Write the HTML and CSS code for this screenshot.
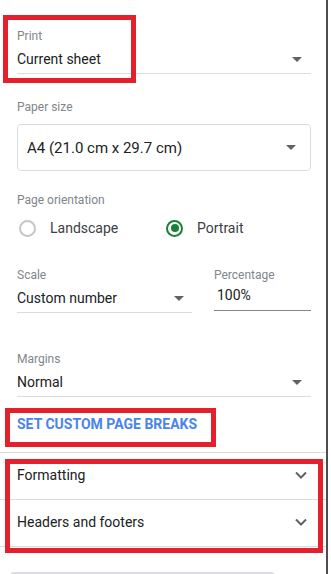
FILE: index.html
```html
<!DOCTYPE html>
<html>
<head>
<meta charset="utf-8">
<link rel="stylesheet" href="styles.css">
</head>
<body>
<div class="panel">
  <div class="content">
    <div class="field">
      <div class="label">Print</div>
      <div class="value-row">
        <span>Current sheet</span>
        <svg class="caret" width="10" height="5" viewBox="0 0 10 5"><path d="M0 0h10L5 5z"/></svg>
      </div>
    </div>

    <div class="field paper">
      <div class="label">Paper size</div>
      <div class="select-box">
        <span>A4 (21.0 cm x 29.7 cm)</span>
        <svg class="caret" width="10" height="5" viewBox="0 0 10 5"><path d="M0 0h10L5 5z"/></svg>
      </div>
    </div>

    <div class="field orient">
      <div class="label">Page orientation</div>
      <div class="radios">
        <div class="radio-opt"><span class="radio"></span><span>Landscape</span></div>
        <div class="radio-opt"><span class="radio checked"></span><span>Portrait</span></div>
      </div>
    </div>

    <div class="scale-grid">
      <div class="field">
        <div class="label">Scale</div>
        <div class="value-row scale-val">
          <span>Custom number</span>
          <svg class="caret" width="10" height="5" viewBox="0 0 10 5"><path d="M0 0h10L5 5z"/></svg>
        </div>
      </div>
      <div class="field">
        <div class="label">Percentage</div>
        <div class="input-row">100%</div>
      </div>
    </div>

    <div class="field margins">
      <div class="label">Margins</div>
      <div class="value-row">
        <span>Normal</span>
        <svg class="caret" width="10" height="5" viewBox="0 0 10 5"><path d="M0 0h10L5 5z"/></svg>
      </div>
    </div>

    <div class="link-btn">SET CUSTOM PAGE BREAKS</div>
  </div>

  <div class="accordion">
    <div class="acc-row">
      <span>Formatting</span>
      <svg class="chev" width="12" height="8" viewBox="0 0 12 8"><path d="M1 1.5l5 5 5-5"/></svg>
    </div>
    <div class="acc-row">
      <span>Headers and footers</span>
      <svg class="chev" width="12" height="8" viewBox="0 0 12 8"><path d="M1 1.5l5 5 5-5"/></svg>
    </div>
  </div>

  <div class="hbar"></div>

  <div class="mark mark-print"></div>
  <div class="mark mark-breaks"></div>
  <div class="mark mark-acc"></div>
</div>
</body>
</html>
```

FILE: styles.css
```css
html, body {
  margin: 0;
  padding: 0;
  background: #ffffff;
}

body {
  font-family: Roboto, "Liberation Sans", Arial, sans-serif;
  color: #202124;
}

.panel {
  position: relative;
  width: 326px;
  height: 574px;
  border-right: 2px solid #4d4d4d;
  overflow: hidden;
}

.content {
  padding: 28px 15px 20px 17px;
}

.label {
  font-size: 12px;
  line-height: 16px;
  color: #80868b;
}

.value-row {
  display: flex;
  justify-content: space-between;
  align-items: center;
  height: 20px;
  margin-top: 5px;
  padding-bottom: 4px;
  border-bottom: 1px solid #dadce0;
  font-size: 14px;
  line-height: 20px;
  color: #202124;
}

.caret {
  fill: #5f6368;
  margin-right: 9px;
  flex: none;
}

.paper {
  margin-top: 25px;
}

.select-box {
  display: flex;
  justify-content: space-between;
  align-items: center;
  box-sizing: border-box;
  height: 47px;
  margin-top: 9px;
  padding: 0 5px 0 9px;
  border: 1px solid #dadce0;
  border-radius: 4px;
  font-size: 15px;
}

.orient {
  margin-top: 21px;
}

.radios {
  display: grid;
  grid-template-columns: 147px auto;
  height: 24px;
  margin-top: 8px;
  padding-left: 2px;
  font-size: 14px;
  color: #3c4043;
}

.radio-opt {
  display: flex;
  align-items: center;
  gap: 14px;
}

.radio {
  box-sizing: border-box;
  width: 17px;
  height: 17px;
  border: 2px solid #c4c7c5;
  border-radius: 50%;
  display: flex;
  align-items: center;
  justify-content: center;
}

.radio.checked {
  border-color: #188038;
}

.radio.checked::after {
  content: "";
  width: 8px;
  height: 8px;
  border-radius: 50%;
  background: #188038;
}

.scale-grid {
  display: grid;
  grid-template-columns: 175px 97px;
  column-gap: 22px;
  margin-top: 27px;
  align-items: start;
}

.scale-val .caret {
  margin-right: 8px;
}

.input-row {
  height: 20px;
  margin-top: 2px;
  padding: 0 0 5px 3px;
  border-bottom: 1px solid #80868b;
  font-size: 14px;
  line-height: 20px;
}

.margins {
  margin-top: 38px;
}

.link-btn {
  margin-top: 19px;
  font-size: 14px;
  font-weight: 700;
  line-height: 16px;
  color: #4a84eb;
}

.accordion {
  border-top: 1px solid #dadce0;
}

.acc-row {
  display: flex;
  justify-content: space-between;
  align-items: center;
  height: 46px;
  padding: 0 19px 0 17px;
  border-bottom: 1px solid #dadce0;
  font-size: 14px;
  color: #202124;
}

.acc-row span {
  margin-top: -2px;
}

.chev {
  fill: none;
  stroke: #5f6368;
  stroke-width: 2;
  margin-top: -3px;
}

.hbar {
  width: 265px;
  height: 8px;
  margin: 25px 0 0 10px;
  border-radius: 4px;
  background: #dadce0;
}

.mark {
  position: absolute;
  box-sizing: border-box;
  border: 5px solid #e3202c;
}

.mark-print {
  left: 3px;
  top: 15px;
  width: 133px;
  height: 68px;
}

.mark-breaks {
  left: 5px;
  top: 408px;
  width: 211px;
  height: 39px;
}

.mark-acc {
  left: 5px;
  top: 459px;
  width: 318px;
  height: 94px;
}
```
